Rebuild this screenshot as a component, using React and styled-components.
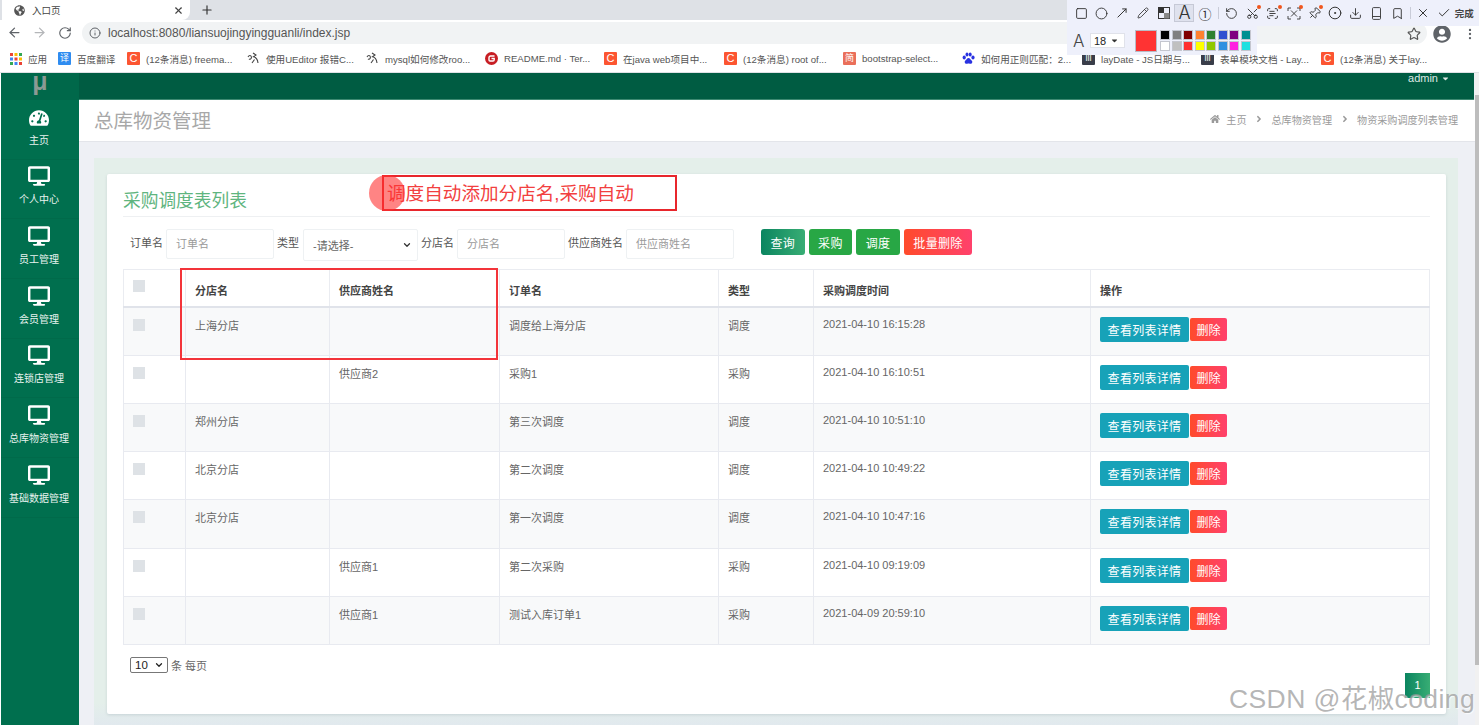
import React from "react";
import styled, { createGlobalStyle } from "styled-components";
import {
  ArrowLeft,
  ArrowRight,
  RotateCw,
  Info,
  Star,
  EllipsisVertical,
  X,
  Plus,
  Square,
  Circle,
  MoveUpRight,
  Pencil,
  RotateCcw,
  Scissors,
  ScanText,
  Pin,
  CircleDot,
  Download,
  Bookmark,
  Check,
  ChevronDown,
} from "lucide-react";
import { FaGlobeAmericas, FaUserCircle, FaDesktop, FaTachometerAlt, FaHome, FaCaretDown, FaAngleRight } from "react-icons/fa";

const FONT = `"Liberation Sans", "Noto Sans CJK SC", sans-serif`;

const bookmarks = [
  { kind: "apps", text: "应用", width: 49 },
  { kind: "fanyi", text: "百度翻译", width: 69 },
  { kind: "csdn", text: "(12条消息) freema...", width: 120 },
  { kind: "ue", text: "使用UEditor 报错C...", width: 119 },
  { kind: "ue", text: "mysql如何修改roo...", width: 119 },
  { kind: "gitee", text: "README.md · Ter...", width: 119 },
  { kind: "csdn", text: "在java web项目中...", width: 120 },
  { kind: "csdn", text: "(12条消息) root of...", width: 119 },
  { kind: "jian", text: "bootstrap-select...", width: 119 },
  { kind: "baidu", text: "如何用正则匹配：2...", width: 120 },
  { kind: "lay", text: "layDate - JS日期与...", width: 119 },
  { kind: "lay", text: "表单模块文档 - Lay...", width: 120 },
  { kind: "csdn", text: "(12条消息) 关于lay...", width: 119 },
];

const menu = ["个人中心", "员工管理", "会员管理", "连锁店管理", "总库物资管理", "基础数据管理"];

const rows = [
  { shop: "上海分店", vendor: "", order: "调度给上海分店", type: "调度", time: "2021-04-10 16:15:28" },
  { shop: "", vendor: "供应商2", order: "采购1", type: "采购", time: "2021-04-10 16:10:51" },
  { shop: "郑州分店", vendor: "", order: "第三次调度", type: "调度", time: "2021-04-10 10:51:10" },
  { shop: "北京分店", vendor: "", order: "第二次调度", type: "调度", time: "2021-04-10 10:49:22" },
  { shop: "北京分店", vendor: "", order: "第一次调度", type: "调度", time: "2021-04-10 10:47:16" },
  { shop: "", vendor: "供应商1", order: "第二次采购", type: "采购", time: "2021-04-10 09:19:09" },
  { shop: "", vendor: "供应商1", order: "测试入库订单1", type: "采购", time: "2021-04-09 20:59:10" },
];

const swatches = [
  "#000000", "#808080", "#800000", "#ff8030", "#308030", "#3050d0", "#800080", "#009090",
  "#ffffff", "#c0c0c0", "#ff3030", "#ffff00", "#90c800", "#3090e0", "#ff20e0", "#20e0e0",
];

const columnWidths = [62, 144, 170, 219, 95, 277, 339];

function Favicon({ kind }) {
  if (kind === "apps") {
    const colors = ["#ea4335", "#fbbc05", "#34a853", "#4285f4", "#ea4335", "#fbbc05", "#34a853", "#4285f4", "#ea4335"];
    return (
      <svg width="12" height="12" viewBox="0 0 12 12">
        {colors.map((c, i) => (
          <rect key={i} x={(i % 3) * 4.5} y={Math.floor(i / 3) * 4.5} width="3" height="3" fill={c} />
        ))}
      </svg>
    );
  }
  if (kind === "fanyi") return <Tile $bg="#2f8cf0">译</Tile>;
  if (kind === "csdn") return <Tile $bg="#fc5531" $size={11}>C</Tile>;
  if (kind === "jian") return <Tile $bg="#ea6f5a">简</Tile>;
  if (kind === "lay") return <Tile $bg="#393d49" $size={9}>lll</Tile>;
  if (kind === "gitee") {
    return (
      <svg width="13" height="13" viewBox="0 0 13 13">
        <circle cx="6.5" cy="6.5" r="6.5" fill="#c71d23" />
        <path d="M9.5 4H5.5a1.5 1.5 0 0 0-1.5 1.5V8a1 1 0 0 0 1 1h3a1.2 1.2 0 0 0 1.2-1.2V6.5H6.5" fill="none" stroke="#fff" strokeWidth="1.4" />
      </svg>
    );
  }
  if (kind === "baidu") {
    return (
      <svg width="13" height="13" viewBox="0 0 13 13" fill="#2932e1">
        <ellipse cx="2.2" cy="5.6" rx="1.6" ry="2" />
        <ellipse cx="5" cy="2.6" rx="1.5" ry="2" />
        <ellipse cx="8.2" cy="2.6" rx="1.5" ry="2" />
        <ellipse cx="11" cy="5.6" rx="1.6" ry="2" />
        <path d="M6.5 6C5 6 4.6 7.6 3.4 8.4 2 9.4 2.8 12 4.8 11.8c1-.1 1.2-.3 1.7-.3s.8.2 1.8.3c2 .2 2.7-2.4 1.3-3.4C8.4 7.6 8 6 6.5 6z" />
      </svg>
    );
  }
  return (
    <svg width="13" height="13" viewBox="0 0 13 13" fill="none" stroke="#444" strokeWidth="1.1">
      <path d="M1 5c1-2 3-2 3.4 0 .3 1.600-1.400 2.800-2.400 2M6 1l3 2-2.500 1.800c2 .4 4 2 4.500 6.200M7.500 7.500 5 11" />
    </svg>
  );
}

function ToolIcon({ children, badge, active }) {
  return (
    <ToolButton $active={active}>
      {children}
      {badge && <Badge />}
    </ToolButton>
  );
}

function BrowserChrome() {
  return (
    <ChromeWrap>
      <TabStrip>
        <Tab>
          <FaGlobeAmericas size={11} color="#555" />
          <TabTitle>入口页</TabTitle>
          <X size={11} color="#444" strokeWidth={2.5} />
        </Tab>
        <NewTab>
          <Plus size={14} color="#333" strokeWidth={2} />
        </NewTab>
      </TabStrip>
      <AddressRow>
        <ArrowLeft size={15} color="#5f6368" />
        <ArrowRight size={15} color="#b4b6b9" />
        <RotateCw size={14} color="#5f6368" />
        <AddressBar>
          <Info size={12} color="#5f6368" />
          <AddressText>localhost:8080/liansuojingyingguanli/index.jsp</AddressText>
        </AddressBar>
        <RightIcons>
          <Star size={14} color="#555" />
          <FaUserCircle size={18} color="#5f6368" />
          <EllipsisVertical size={14} color="#5f6368" />
        </RightIcons>
      </AddressRow>
      <BookmarkRow>
        {bookmarks.map((b, i) => (
          <BookmarkItem key={i} $width={b.width}>
            <FaviconSlot>
              <Favicon kind={b.kind} />
            </FaviconSlot>
            <BookmarkText>{b.text}</BookmarkText>
          </BookmarkItem>
        ))}
      </BookmarkRow>
    </ChromeWrap>
  );
}

function CaptureToolbar() {
  return (
    <ToolbarWrap>
      <ToolRow>
        <ToolIcon><Square size={13} /></ToolIcon>
        <ToolIcon><Circle size={13} /></ToolIcon>
        <ToolIcon><MoveUpRight size={14} /></ToolIcon>
        <ToolIcon><Pencil size={12} /></ToolIcon>
        <ToolIcon>
          <svg width="12" height="12" viewBox="0 0 12 12">
            <rect x="0.500" y="0.500" width="11" height="11" fill="none" stroke="#333" />
            <rect x="0.500" y="0.500" width="5.500" height="5.500" fill="#333" />
            <rect x="6" y="6" width="5.500" height="5.500" fill="#888" />
          </svg>
        </ToolIcon>
        <ToolIcon active><ToolLetter>A</ToolLetter></ToolIcon>
        <ToolIcon><CircledOne>①</CircledOne></ToolIcon>
        <ToolDivider />
        <ToolIcon><RotateCcw size={13} /></ToolIcon>
        <ToolIcon badge><UprightScissors size={13} /></ToolIcon>
        <ToolIcon badge><ScanText size={13} /></ToolIcon>
        <ToolIcon badge>
          <svg width="14" height="13" viewBox="0 0 14 13" fill="none" stroke="#333" strokeWidth="0.9">
            <path d="M1 4V1h3M10 1h3v3M1 9v3h3M10 12h3V9M4 3.500l6 6M10 3.500l-6 6" />
          </svg>
        </ToolIcon>
        <ToolIcon badge><TiltedPin size={13} /></ToolIcon>
        <ToolIcon><CircleDot size={14} /></ToolIcon>
        <ToolIcon><Download size={13} /></ToolIcon>
        <ToolIcon>
          <svg width="11" height="13" viewBox="0 0 11 13" fill="none" stroke="#333" strokeWidth="0.9">
            <rect x="1.500" y="0.600" width="8" height="11.800" rx="1" />
            <path d="M1.500 9.500h8" />
          </svg>
        </ToolIcon>
        <ToolIcon><Bookmark size={13} /></ToolIcon>
        <ToolDivider />
        <ToolIcon><X size={14} /></ToolIcon>
        <ToolIcon><Check size={14} /></ToolIcon>
        <DoneText>完成</DoneText>
      </ToolRow>
      <StylePanel>
        <BigLetter>A</BigLetter>
        <SizeSelect>
          18
          <FaCaretDown size={9} color="#333" />
        </SizeSelect>
        <CurrentColor />
        <Palette>
          {swatches.map((c) => (
            <Swatch key={c} $color={c} />
          ))}
        </Palette>
      </StylePanel>
    </ToolbarWrap>
  );
}

function Sidebar() {
  return (
    <Side>
      <Logo>
        <LogoMark>μ</LogoMark>
      </Logo>
      <MenuItem>
        <FaTachometerAlt size={20} color="#fff" />
        <MenuLabel>主页</MenuLabel>
      </MenuItem>
      {menu.map((m) => (
        <MenuItem key={m}>
          <FaDesktop size={22} color="#fff" />
          <MenuLabel>{m}</MenuLabel>
        </MenuItem>
      ))}
    </Side>
  );
}

function Content() {
  return (
    <Panel>
      <Card>
        <CardHeader>采购调度表列表</CardHeader>
        <SearchForm>
          <FieldLabel>订单名</FieldLabel>
          <TextInput placeholder="订单名" readOnly />
          <FieldLabel $gap={4}>类型</FieldLabel>
          <TypeSelect>
            -请选择-
            <ChevronDown size={10} color="#333" strokeWidth={3} />
          </TypeSelect>
          <FieldLabel>分店名</FieldLabel>
          <TextInput placeholder="分店名" readOnly />
          <FieldLabel>供应商姓名</FieldLabel>
          <TextInput placeholder="供应商姓名" readOnly />
          <FormButtons>
            <FormButton $variant="query">查询</FormButton>
            <FormButton $variant="green">采购</FormButton>
            <FormButton $variant="green">调度</FormButton>
            <FormButton $variant="danger">批量删除</FormButton>
          </FormButtons>
        </SearchForm>
        <Table>
          <colgroup>
            {columnWidths.map((w, i) => (
              <col key={i} style={{ width: w }} />
            ))}
          </colgroup>
          <thead>
            <tr>
              <Th><CheckBox /></Th>
              <Th>分店名</Th>
              <Th>供应商姓名</Th>
              <Th>订单名</Th>
              <Th>类型</Th>
              <Th>采购调度时间</Th>
              <Th>操作</Th>
            </tr>
          </thead>
          <tbody>
            {rows.map((r, i) => (
              <Tr key={i} $odd={i % 2 === 0}>
                <Td><CheckBox /></Td>
                <Td>{r.shop}</Td>
                <Td>{r.vendor}</Td>
                <Td>{r.order}</Td>
                <Td>{r.type}</Td>
                <TimeTd>{r.time}</TimeTd>
                <ActionTd>
                  <ActionRow>
                    <DetailButton>查看列表详情</DetailButton>
                    <DeleteButton>删除</DeleteButton>
                  </ActionRow>
                </ActionTd>
              </Tr>
            ))}
          </tbody>
        </Table>
        <Footer>
          <PageSize>
            <PageSizeBox>
              10
              <ChevronDown size={10} color="#222" strokeWidth={3} />
            </PageSizeBox>
            条 每页
          </PageSize>
          <PageNumber>1</PageNumber>
        </Footer>
      </Card>
    </Panel>
  );
}

export default function App() {
  return (
    <>
      <GlobalStyle />
      <Page>
        <BrowserChrome />
        <Body>
          <Sidebar />
          <Main>
            <TopBar>
              <UserMenu>
                admin
                <FaCaretDown size={9} />
              </UserMenu>
            </TopBar>
            <PageHeader>
              <PageTitle>总库物资管理</PageTitle>
              <Breadcrumb>
                <FaHome size={10} />
                <Crumb>主页</Crumb>
                <FaAngleRight size={10} />
                <Crumb>总库物资管理</Crumb>
                <FaAngleRight size={10} />
                <Crumb>物资采购调度列表管理</Crumb>
              </Breadcrumb>
            </PageHeader>
            <Content />
          </Main>
          <ScrollTrack>
            <ScrollThumb />
          </ScrollTrack>
        </Body>
        <CaptureToolbar />
        <NoteBox>调度自动添加分店名,采购自动</NoteBox>
        <NoteDot />
        <ColumnHighlight />
        <Watermark>CSDN @花椒coding</Watermark>
      </Page>
    </>
  );
}

const GlobalStyle = createGlobalStyle`
  html, body {
    margin: 0;
    padding: 0;
    background: #fff;
    font-family: ${FONT};
  }
  * {
    box-sizing: border-box;
  }
`;

const Page = styled.div`
  position: relative;
  width: 1479px;
  height: 725px;
  overflow: hidden;
  display: flex;
  flex-direction: column;
`;

const ChromeWrap = styled.div`
  height: 73px;
  flex: none;
  background: #fff;
`;

const TabStrip = styled.div`
  height: 20px;
  background: #dee1e6;
  display: flex;
  align-items: center;
  padding-left: 2px;
`;

const Tab = styled.div`
  width: 188px;
  height: 20px;
  background: #fff;
  border-radius: 0 0 8px 0;
  display: flex;
  align-items: center;
  padding: 0 6px 0 12px;
`;

const TabTitle = styled.span`
  flex: 1;
  margin-left: 7px;
  font-size: 9.500px;
  color: #444;
`;

const NewTab = styled.div`
  margin-left: 10px;
  display: flex;
  align-items: center;
`;

const AddressRow = styled.div`
  height: 25px;
  padding-left: 7px;
  display: flex;
  align-items: center;
  gap: 10px;
  & > svg:nth-child(3) {
    margin-left: 1px;
  }
`;

const AddressBar = styled.div`
  width: 1345px;
  height: 22px;
  border-radius: 11px;
  background: #f1f3f4;
  display: flex;
  align-items: center;
  padding-left: 7px;
  flex: none;
`;

const AddressText = styled.span`
  margin-left: 7px;
  font-size: 12px;
  color: #555;
`;

const RightIcons = styled.div`
  position: absolute;
  left: 1407px;
  top: 24px;
  width: 70px;
  height: 20px;
  display: flex;
  align-items: center;
  justify-content: space-between;
`;

const BookmarkRow = styled.div`
  height: 28px;
  padding-left: 9px;
  display: flex;
  align-items: center;
  border-bottom: 1px solid #dfe1e5;
`;

const BookmarkItem = styled.div`
  width: ${(p) => p.$width}px;
  flex: none;
  display: flex;
  align-items: center;
  gap: 6px;
  white-space: nowrap;
  overflow: hidden;
`;

const FaviconSlot = styled.span`
  display: inline-flex;
  width: 13px;
  height: 13px;
  align-items: center;
  justify-content: center;
  flex: none;
`;

const Tile = styled.span`
  width: 13px;
  height: 13px;
  border-radius: 1px;
  background: ${(p) => p.$bg};
  color: #fff;
  font-size: ${(p) => p.$size || 9}px;
  line-height: 13px;
  text-align: center;
  display: block;
`;

const BookmarkText = styled.span`
  font-size: 9.600px;
  color: #555;
`;

const ToolbarWrap = styled.div`
  position: absolute;
  left: 1067px;
  top: 0;
  width: 412px;
`;

const ToolRow = styled.div`
  height: 26px;
  background: #eef0fb;
  display: flex;
  align-items: center;
  padding-left: 4px;
  gap: 0.700px;
`;

const ToolButton = styled.span`
  position: relative;
  width: 20px;
  height: 18px;
  display: inline-flex;
  align-items: center;
  justify-content: center;
  color: #333;
  background: ${(p) => (p.$active ? "#dfe2ee" : "transparent")};
  border: 1px solid ${(p) => (p.$active ? "#c6c9d6" : "transparent")};
  & svg.lucide {
    stroke-width: 1.700;
  }
`;

const UprightScissors = styled(Scissors)`
  transform: rotate(-90deg);
`;

const TiltedPin = styled(Pin)`
  transform: rotate(45deg);
`;

const Badge = styled.i`
  position: absolute;
  right: 0;
  top: 0;
  width: 4px;
  height: 4px;
  border-radius: 50%;
  background: #f0561d;
`;

const ToolLetter = styled.span`
  font-size: 18px;
  line-height: 1;
  font-weight: 300;
  font-family: Inter, "Liberation Sans", sans-serif;
`;

const CircledOne = styled.span`
  font-size: 13px;
  line-height: 1;
  font-family: "Noto Sans CJK SC", sans-serif;
`;

const ToolDivider = styled.span`
  width: 1px;
  height: 12px;
  margin: 0 2px;
  background: #c9ccd8;
`;

const DoneText = styled.span`
  font-size: 9.500px;
  font-weight: 700;
  color: #444;
`;

const StylePanel = styled.div`
  width: 190px;
  height: 29px;
  background: #eef0fb;
  display: flex;
  align-items: center;
  padding-left: 6px;
`;

const BigLetter = styled.span`
  font-size: 17px;
  font-weight: 300;
  font-family: Inter, "Liberation Sans", sans-serif;
  color: #444;
  width: 17px;
`;

const SizeSelect = styled.span`
  width: 35px;
  height: 15px;
  background: #fff;
  border: 1px solid #e0e2ea;
  font-size: 11px;
  color: #222;
  display: flex;
  align-items: center;
  justify-content: space-between;
  padding: 0 5px 0 3px;
`;

const CurrentColor = styled.span`
  width: 22px;
  height: 22px;
  margin-left: 10px;
  background: #ff3333;
  border: 1px solid #b9bcc6;
`;

const Palette = styled.div`
  margin-left: 3px;
  display: grid;
  grid-template-columns: repeat(8, 10px);
  grid-auto-rows: 10px;
  gap: 1.500px;
`;

const Swatch = styled.span`
  background: ${(p) => p.$color};
  border: 1px solid #c4c6cf;
`;

const Body = styled.div`
  flex: 1;
  min-height: 0;
  display: flex;
  padding-left: 1px;
`;

const Side = styled.aside`
  width: 78px;
  flex: none;
  background: #006f4e;
`;

const Logo = styled.div`
  height: 27px;
  background: #00684a;
  overflow: hidden;
  display: flex;
  justify-content: center;
`;

const LogoMark = styled.span`
  font-size: 25px;
  font-weight: 700;
  color: #8b9a94;
  line-height: 17px;
  font-family: "Liberation Sans", sans-serif;
`;

const MenuItem = styled.div`
  height: 59.670px;
  display: flex;
  flex-direction: column;
  align-items: center;
  justify-content: flex-end;
  padding: 0 2px 12px 0;
  gap: 7px;
  border-bottom: 1px solid #006a4a;
`;

const MenuLabel = styled.span`
  font-size: 10px;
  line-height: 12px;
  color: #e8f3ef;
`;

const Main = styled.main`
  width: 1396px;
  flex: none;
  display: flex;
  flex-direction: column;
  min-height: 0;
  overflow: hidden;
  background: #eef0f5;
`;

const TopBar = styled.div`
  height: 27px;
  flex: none;
  margin-right: 1px;
  background: #005c42;
  border-bottom: 1px solid #3d8a72;
  display: flex;
  justify-content: flex-end;
  padding-right: 24px;
`;

const UserMenu = styled.div`
  display: flex;
  align-items: center;
  gap: 3px;
  height: 10px;
  font-size: 11px;
  color: #dfe9e5;
`;

const PageHeader = styled.div`
  height: 42px;
  flex: none;
  background: #fff;
  border-bottom: 1px solid #e3e5ea;
  display: flex;
  align-items: center;
  justify-content: space-between;
  padding: 0 17px 3px 15px;
`;

const PageTitle = styled.h1`
  margin: 0;
  font-size: 19.500px;
  font-weight: 400;
  color: #a8a8a8;
`;

const Breadcrumb = styled.div`
  display: flex;
  align-items: center;
  gap: 7.500px;
  color: #9a9a9a;
  & > svg:first-child {
    margin-right: -1px;
  }
`;

const Crumb = styled.span`
  font-size: 10.100px;
`;

const Panel = styled.div`
  flex: 1;
  margin: 16px 17px 0 15px;
  padding: 16px 12px 11px 13px;
  background: #e4efea;
  background-image: linear-gradient(to bottom, #e4efea 96%, #e1e9ee 100%);
`;

const Card = styled.section`
  height: 540px;
  background: #fff;
  border-radius: 2px;
  padding: 0 16px;
  box-shadow: 0 1px 3px rgba(120, 140, 150, 0.25);
`;

const CardHeader = styled.h2`
  margin: 0;
  height: 43px;
  padding-top: 15px;
  font-size: 17.700px;
  line-height: 24px;
  font-weight: 400;
  color: #5fb57f;
  border-bottom: 1px solid #eef0f2;
`;

const SearchForm = styled.div`
  margin-top: 12px;
  height: 32px;
  padding-left: 7px;
  display: flex;
  align-items: flex-start;
`;

const FieldLabel = styled.label`
  font-size: 11px;
  line-height: 28px;
  color: #555;
  margin: 0 ${(p) => p.$gap || 3}px 0 0;
`;

const TextInput = styled.input`
  width: 108px;
  height: 30px;
  padding: 0 9px;
  margin-right: 3px;
  border: 1px solid #eef1f3;
  border-radius: 2px;
  outline: none;
  font-size: 11px;
  font-family: ${FONT};
  color: #555;
  &::placeholder {
    color: #9a9a9a;
  }
`;

const TypeSelect = styled.div`
  width: 115px;
  height: 32px;
  margin-right: 3px;
  padding: 0 5px 0 9px;
  border: 1px solid #eef1f3;
  border-radius: 2px;
  display: flex;
  align-items: center;
  justify-content: space-between;
  font-size: 11px;
  color: #666;
`;

const FormButtons = styled.div`
  display: flex;
  gap: 4px;
  margin-left: 24px;
`;

const variants = {
  query: "linear-gradient(to right, #0b8560, #38ad74)",
  green: "#28a745",
  danger: "linear-gradient(to right, #ff4b2b, #ff416c)",
};

const FormButton = styled.button`
  height: 26px;
  padding: 0 9.500px;
  border: 0;
  border-radius: 3px;
  background: ${(p) => variants[p.$variant]};
  color: #fff;
  font-size: 12px;
  font-family: ${FONT};
  letter-spacing: 0.300px;
`;

const Table = styled.table`
  width: 1306px;
  margin-top: 8px;
  table-layout: fixed;
  border-collapse: collapse;
  font-size: 11px;
  color: #666;
`;

const Th = styled.th`
  height: 37px;
  padding: 4px 10px 0 9px;
  text-align: left;
  vertical-align: middle;
  font-weight: 700;
  color: #444;
  border: 1px solid #eaecf1;
  border-bottom: 2px solid #e0e3ea;
  &:first-child {
    padding-top: 0;
  }
  &:first-child span {
    margin-top: -4px;
  }
`;

const Tr = styled.tr`
  background: ${(p) => (p.$odd ? "#f8f9fa" : "#fff")};
  &:first-child td {
    height: 49px;
  }
`;

const Td = styled.td`
  height: 48.170px;
  padding: 11px 10px 0 9px;
  vertical-align: top;
  line-height: 14px;
  border: 1px solid #e8eaf0;
`;

const TimeTd = styled(Td)`
  padding-top: 9px;
`;

const ActionTd = styled(Td)`
  padding-top: 9px;
`;

const ActionRow = styled.div`
  display: flex;
  align-items: center;
  gap: 1px;
`;

const CheckBox = styled.span`
  display: block;
  width: 12px;
  height: 12px;
  background: #dee2e6;
`;

const DetailButton = styled.button`
  width: 89px;
  height: 25px;
  padding: 0;
  border: 0;
  border-radius: 2px;
  background: #17a2b8;
  color: #fff;
  font-size: 12px;
  letter-spacing: 0.300px;
  font-family: ${FONT};
`;

const DeleteButton = styled.button`
  width: 37px;
  height: 23px;
  padding: 0;
  border: 0;
  border-radius: 2px;
  background: linear-gradient(to right, #ff4b2b, #ff416c);
  color: #fff;
  font-size: 12px;
  font-family: ${FONT};
`;

const Footer = styled.div`
  margin-top: 12px;
  display: flex;
  justify-content: space-between;
  align-items: flex-start;
  padding-left: 7px;
`;

const PageSize = styled.div`
  display: flex;
  align-items: center;
  gap: 3px;
  font-size: 11px;
  color: #666;
`;

const PageSizeBox = styled.span`
  width: 38px;
  height: 16px;
  border: 1px solid #777;
  border-radius: 2px;
  display: flex;
  align-items: center;
  justify-content: space-between;
  padding: 0 3px 0 4px;
  font-size: 11.500px;
  color: #222;
`;

const PageNumber = styled.span`
  width: 25px;
  height: 25px;
  margin-top: 16px;
  background: linear-gradient(to right, #0b8560, #38ad74);
  color: #fff;
  font-size: 11px;
  line-height: 25px;
  text-align: center;
`;

const ScrollTrack = styled.div`
  width: 4px;
  flex: none;
  background: #f1f1f1;
  padding-top: 22px;
`;

const ScrollThumb = styled.div`
  height: 570px;
  background: #bdbdbd;
`;

const NoteBox = styled.div`
  position: absolute;
  left: 382px;
  top: 175px;
  width: 295px;
  height: 36px;
  padding-left: 3px;
  border: 2px solid #e8262c;
  color: #f24040;
  font-size: 18.600px;
  line-height: 33px;
  white-space: nowrap;
`;

const NoteDot = styled.div`
  position: absolute;
  left: 369px;
  top: 175px;
  width: 36px;
  height: 36px;
  border-radius: 50%;
  background: rgba(255, 50, 50, 0.6);
`;

const ColumnHighlight = styled.div`
  position: absolute;
  left: 180px;
  top: 268px;
  width: 318px;
  height: 92px;
  border: 2px solid #f3343a;
`;

const Watermark = styled.div`
  position: absolute;
  left: 1229px;
  top: 682px;
  font-size: 26.500px;
  line-height: 34px;
  letter-spacing: 0.400px;
  white-space: nowrap;
  color: rgba(150, 150, 150, 0.7);
  text-shadow: 1px 1px 1px rgba(255, 255, 255, 0.7);
`;
